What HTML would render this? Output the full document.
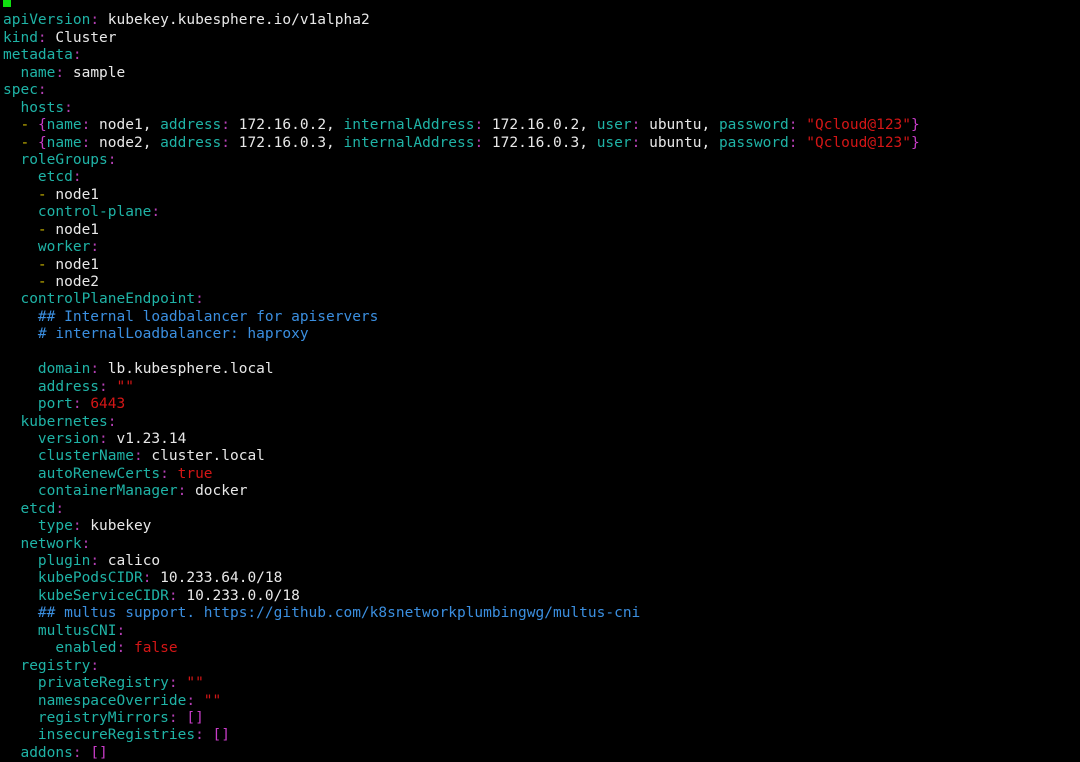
<!DOCTYPE html>
<html><head><meta charset="utf-8"><style>
html,body{margin:0;padding:0;background:#000;width:1080px;height:755px;overflow:hidden}
pre{margin:0;position:absolute;left:3px;top:-8px;font-family:"DejaVu Sans Mono","Liberation Mono",monospace;font-size:14.5px;line-height:17.43px;color:#e8e8e8}
.k{color:#1fb3a6}.c{color:#b540b5}.s{color:#d41616}.m{color:#3b8fe0}.p{color:#c83cc8}.d{color:#c8b400}
.cur{display:inline-block;width:8px;height:15px;background:#10e010;vertical-align:0px}
</style></head><body><pre><span class="cur"></span>
<span class="k">apiVersion</span><span class="c">:</span> kubekey.kubesphere.io/v1alpha2
<span class="k">kind</span><span class="c">:</span> Cluster
<span class="k">metadata</span><span class="c">:</span>
  <span class="k">name</span><span class="c">:</span> sample
<span class="k">spec</span><span class="c">:</span>
  <span class="k">hosts</span><span class="c">:</span>
  <span class="d">-</span> <span class="p">{</span><span class="k">name</span><span class="c">:</span> node1, <span class="k">address</span><span class="c">:</span> 172.16.0.2, <span class="k">internalAddress</span><span class="c">:</span> 172.16.0.2, <span class="k">user</span><span class="c">:</span> ubuntu, <span class="k">password</span><span class="c">:</span> <span class="s">"Qcloud@123"</span><span class="p">}</span>
  <span class="d">-</span> <span class="p">{</span><span class="k">name</span><span class="c">:</span> node2, <span class="k">address</span><span class="c">:</span> 172.16.0.3, <span class="k">internalAddress</span><span class="c">:</span> 172.16.0.3, <span class="k">user</span><span class="c">:</span> ubuntu, <span class="k">password</span><span class="c">:</span> <span class="s">"Qcloud@123"</span><span class="p">}</span>
  <span class="k">roleGroups</span><span class="c">:</span>
    <span class="k">etcd</span><span class="c">:</span>
    <span class="d">-</span> node1
    <span class="k">control-plane</span><span class="c">:</span>
    <span class="d">-</span> node1
    <span class="k">worker</span><span class="c">:</span>
    <span class="d">-</span> node1
    <span class="d">-</span> node2
  <span class="k">controlPlaneEndpoint</span><span class="c">:</span>
    <span class="m">## Internal loadbalancer for apiservers</span>
    <span class="m"># internalLoadbalancer: haproxy</span>

    <span class="k">domain</span><span class="c">:</span> lb.kubesphere.local
    <span class="k">address</span><span class="c">:</span> <span class="s">""</span>
    <span class="k">port</span><span class="c">:</span> <span class="s">6443</span>
  <span class="k">kubernetes</span><span class="c">:</span>
    <span class="k">version</span><span class="c">:</span> v1.23.14
    <span class="k">clusterName</span><span class="c">:</span> cluster.local
    <span class="k">autoRenewCerts</span><span class="c">:</span> <span class="s">true</span>
    <span class="k">containerManager</span><span class="c">:</span> docker
  <span class="k">etcd</span><span class="c">:</span>
    <span class="k">type</span><span class="c">:</span> kubekey
  <span class="k">network</span><span class="c">:</span>
    <span class="k">plugin</span><span class="c">:</span> calico
    <span class="k">kubePodsCIDR</span><span class="c">:</span> 10.233.64.0/18
    <span class="k">kubeServiceCIDR</span><span class="c">:</span> 10.233.0.0/18
    <span class="m">## multus support. https://github.com/k8snetworkplumbingwg/multus-cni</span>
    <span class="k">multusCNI</span><span class="c">:</span>
      <span class="k">enabled</span><span class="c">:</span> <span class="s">false</span>
  <span class="k">registry</span><span class="c">:</span>
    <span class="k">privateRegistry</span><span class="c">:</span> <span class="s">""</span>
    <span class="k">namespaceOverride</span><span class="c">:</span> <span class="s">""</span>
    <span class="k">registryMirrors</span><span class="c">:</span> <span class="p">[]</span>
    <span class="k">insecureRegistries</span><span class="c">:</span> <span class="p">[]</span>
  <span class="k">addons</span><span class="c">:</span> <span class="p">[]</span>
</pre></body></html>
